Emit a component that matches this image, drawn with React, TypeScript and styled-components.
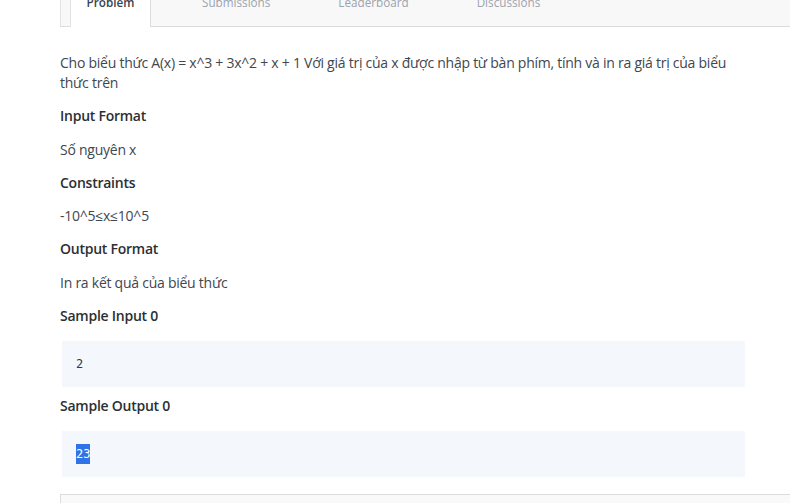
import styled, { createGlobalStyle } from 'styled-components';

const GlobalStyle = createGlobalStyle`
  html, body {
    margin: 0;
    padding: 0;
    background: #ffffff;
    overflow: hidden;
  }
  body {
    font-family: "Open Sans", "Noto Sans", sans-serif;
  }
`;

const Page = styled.div`
  width: 790px;
  height: 503px;
  overflow: hidden;
  background: #ffffff;
`;

const TabBar = styled.div`
  display: flex;
  align-items: stretch;
  height: 50px;
  margin-top: -23px;
  margin-left: 60px;
  background: #f8f8f8;
  border-left: 1px solid #e3e3e3;
  border-bottom: 1px solid #dcdcdc;
  box-sizing: border-box;
  padding-left: 9px;
`;

const Tab = styled.div<{ $active?: boolean }>`
  display: flex;
  align-items: center;
  justify-content: center;
  box-sizing: border-box;
  font-size: 11.7px;
  padding: ${(p) => (p.$active ? '0 15px' : '0 34px')};
  width: ${(p) => (p.$active ? '81px' : 'auto')};
  color: ${(p) => (p.$active ? '#39424e' : '#9ca3ad')};
  font-weight: ${(p) => (p.$active ? 600 : 400)};
  background: ${(p) => (p.$active ? '#ffffff' : 'transparent')};
  border-left: ${(p) => (p.$active ? '1px solid #e3e3e3' : 'none')};
  border-right: ${(p) => (p.$active ? '1px solid #dcdcdc' : 'none')};
  margin-bottom: ${(p) => (p.$active ? '-1px' : '0')};
  margin-right: ${(p) => (p.$active ? '17px' : '0')};
`;

const Content = styled.div`
  width: 685px;
  margin-left: 60px;
  padding-top: 26px;
  color: #40474f;
  font-size: 14px;
  letter-spacing: -0.25px;
  line-height: 20px;
`;

const Para = styled.p`
  margin: 0 0 13.3px;
`;

const Heading = styled.h3<{ $tight?: boolean }>`
  margin: 0 0 ${(p) => (p.$tight ? 0 : 13.3)}px;
  font-size: 14px;
  line-height: 20px;
  font-weight: 600;
  color: #2b2f33;
`;

const SampleBox = styled.pre<{ $after?: number }>`
  margin: 15px 0 ${(p) => p.$after ?? 9}px 2px;
  height: 46px;
  box-sizing: border-box;
  padding: 0 14px;
  display: flex;
  align-items: center;
  background: #f4f8fd;
  font-family: "DejaVu Sans Mono", "Liberation Mono", monospace;
  font-size: 12px;
  letter-spacing: 0;
  color: #333a42;
`;

const Selected = styled.span`
  background: #2e74e8;
  color: #ffffff;
`;

const EditorBox = styled.div`
  margin-left: 60px;
  height: 40px;
  background: #f9f9f9;
  border: 1px solid #dddddd;
  border-right: none;
`;

const tabs = ['Submissions', 'Leaderboard', 'Discussions'];

export default function App() {
  return (
    <Page>
      <GlobalStyle />
      <TabBar>
        <Tab $active>Problem</Tab>
        {tabs.map((t) => (
          <Tab key={t}>{t}</Tab>
        ))}
      </TabBar>
      <Content>
        <Para>
          Cho biểu thức A(x) = x^3 + 3x^2 + x + 1 Với giá trị của x được nhập từ bàn phím, tính và in ra giá trị của biểu thức trên
        </Para>
        <Heading>Input Format</Heading>
        <Para>Số nguyên x</Para>
        <Heading>Constraints</Heading>
        <Para>-10^5≤x≤10^5</Para>
        <Heading>Output Format</Heading>
        <Para>In ra kết quả của biểu thức</Para>
        <Heading $tight>Sample Input 0</Heading>
        <SampleBox>2</SampleBox>
        <Heading $tight>Sample Output 0</Heading>
        <SampleBox $after={17}>
          <Selected>23</Selected>
        </SampleBox>
      </Content>
      <EditorBox />
    </Page>
  );
}
